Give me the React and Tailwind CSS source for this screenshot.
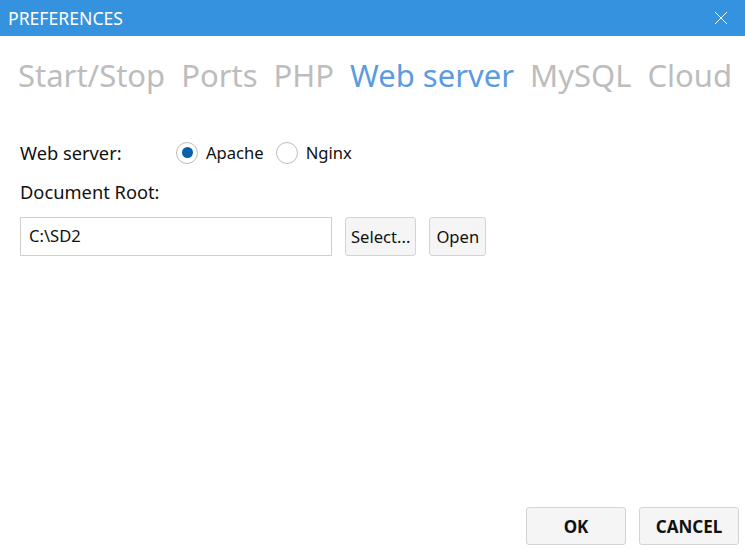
import React from "react";

const font = { fontFamily: '"Noto Sans", "Open Sans", sans-serif' };

function Radio({ checked, label }) {
  return (
    <label className="flex items-center gap-2">
      <span className="w-[22px] h-[22px] rounded-full border border-[#bdbdbd] bg-white flex items-center justify-center">
        {checked && <span className="w-[11px] h-[11px] rounded-full bg-[#0a5fa8]" />}
      </span>
      <span className="text-[16.6px]">{label}</span>
    </label>
  );
}

export default function App() {
  return (
    <div className="w-[745px] h-[552px] bg-white flex flex-col text-[18.3px] text-[#111]" style={font}>
      <div className="h-9 bg-[#3592de] flex items-center justify-between pl-2 pr-4 text-white">
        <span className="text-[17.6px]">PREFERENCES</span>
        <svg width="14" height="14" viewBox="0 0 14 14" className="mr-[1px]">
          <path d="M1 1L13 13M13 1L1 13" stroke="white" strokeWidth="1" />
        </svg>
      </div>
      <div className="flex gap-[16px] pl-[18px] mt-[14px] text-[31px] text-[#bdbdbd] leading-[50px]">
        <span>Start/Stop</span>
        <span>Ports</span>
        <span>PHP</span>
        <span className="text-[#5b9be0]">Web server</span>
        <span>MySQL</span>
        <span>Cloud</span>
      </div>
      <div className="flex flex-col pl-5 mt-[38px]">
        <div className="flex items-center h-[30px]">
          <span className="w-[156px]">Web server:</span>
          <div className="flex items-center gap-[12px]">
            <Radio checked label="Apache" />
            <Radio label="Nginx" />
          </div>
        </div>
        <div className="h-[30px] mt-[9px] flex items-center">Document Root:</div>
        <div className="flex items-center gap-[13px] mt-[10px] text-[16.6px]">
          <div className="w-[312px] h-[39px] border border-[#cfcfcf] flex items-center pl-2">C:\SD2</div>
          <button className="h-[39px] px-[5px] pt-[2px] border border-[#d4d4d4] rounded-[3px] bg-[#f5f5f5]">Select...</button>
          <button className="h-[39px] px-[6px] pt-[2px] border border-[#d4d4d4] rounded-[3px] bg-[#f5f5f5]">Open</button>
        </div>
      </div>
      <div className="flex-1" />
      <div className="flex justify-end gap-[13px] pr-[6px] pb-[7px]">
        <button className="w-[100px] h-[38px] pt-[2px] border border-[#d4d4d4] rounded-[3px] bg-[#f5f5f5] font-bold text-[17px]">OK</button>
        <button className="w-[100px] h-[38px] pt-[2px] border border-[#d4d4d4] rounded-[3px] bg-[#f5f5f5] font-bold text-[17px]">CANCEL</button>
      </div>
    </div>
  );
}
